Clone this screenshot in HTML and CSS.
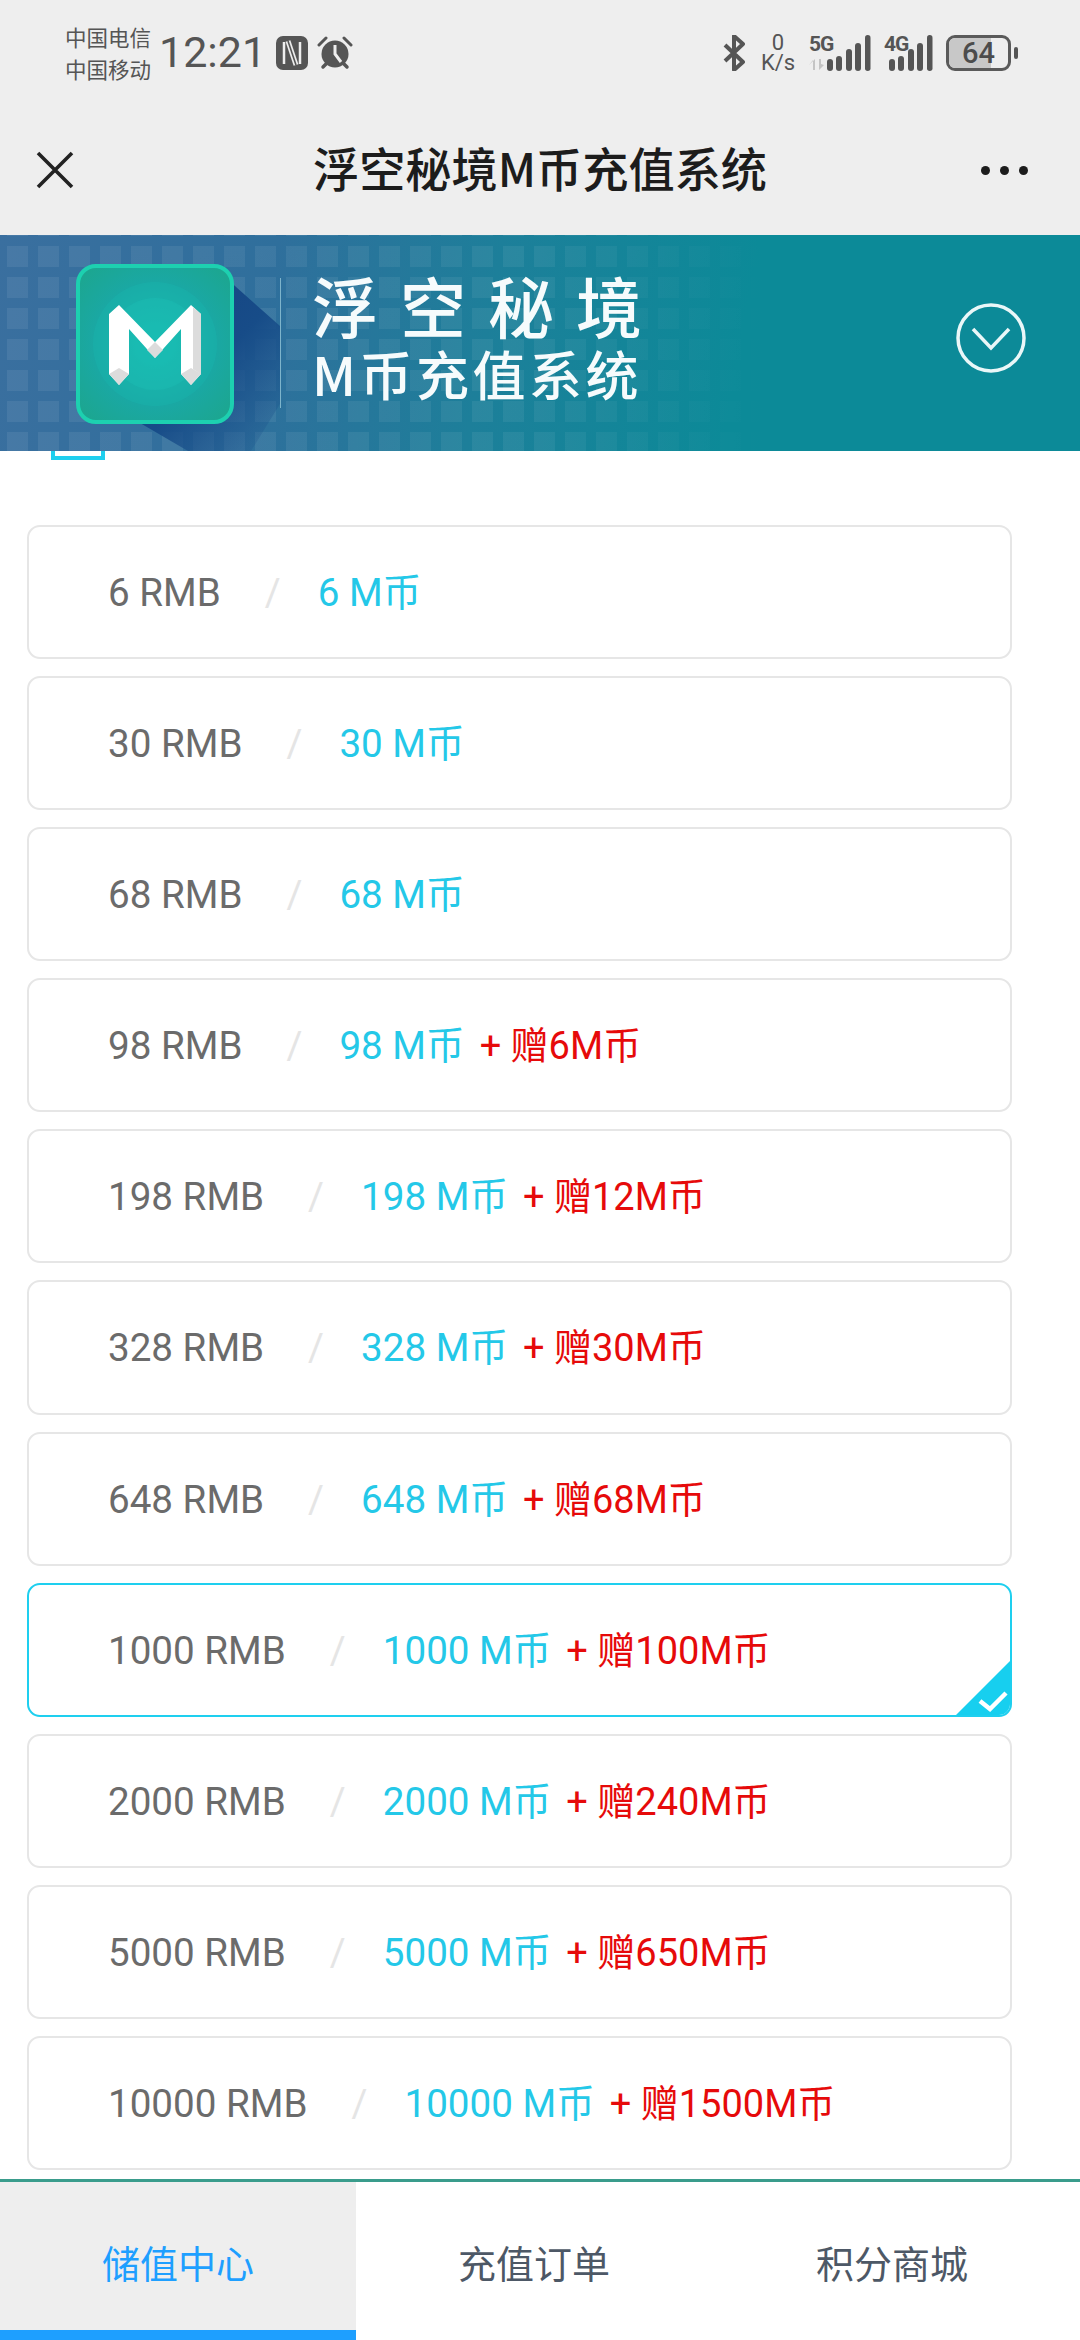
FILE: index.html
```html
<!DOCTYPE html>
<html lang="zh">
<head>
<meta charset="utf-8">
<title>浮空秘境M币充值系统</title>
<link rel="stylesheet" href="styles.css">
</head>
<body>
<div class="phone">
  <header class="chrome">
    <div class="status">
      <div class="carriers"><span>中国电信</span><span>中国移动</span></div>
      <div class="time">12:21</div>
      <svg class="nfc" width="32" height="34" viewBox="0 0 32 34"><rect width="32" height="34" rx="7" fill="#555"/><path d="M8 6v22M24 6v22" stroke="#eee" stroke-width="2.5" fill="none"/><path d="M12 5l8 24" stroke="#eee" stroke-width="5" fill="none"/><path d="M12 5l8 24" stroke="#555" stroke-width="1.6" fill="none"/></svg>
      <svg class="alarm" width="36" height="35" viewBox="0 0 36 35"><circle cx="18" cy="19" r="13.5" fill="#555"/><path d="M18 10v9l6 8" stroke="#eee" stroke-width="3" fill="none"/><path d="M2 10L9 3M34 10L27 3" stroke="#555" stroke-width="3" fill="none" stroke-linecap="round"/><path d="M6 32l3-3M30 32l-3-3" stroke="#555" stroke-width="3.5" stroke-linecap="round"/></svg>
      <div class="status-right">
        <svg class="bt" width="22" height="36" viewBox="0 0 22 36"><path d="M2 10l18 17-9 8V1l9 8L2 26" fill="none" stroke="#555" stroke-width="4" stroke-linejoin="round"/></svg>
        <div class="speed"><span>0</span><span>K/s</span></div>
        <div class="signal">
          <span class="net">5G</span>
          <svg class="arrows" width="16" height="11" viewBox="0 0 16 11"><path d="M0 6l4-5v10h2V0zM10 0v11l5-5-3-1V0z" fill="#c4c4c4"/></svg>
          <svg class="bars" width="44" height="36" viewBox="0 0 44 36"><g fill="#555"><rect x="0" y="24" width="6" height="12" rx="3"/><rect x="9" y="21" width="6" height="15" rx="3"/><rect x="19" y="14" width="6" height="22" rx="3"/><rect x="28" y="8" width="6" height="28" rx="3"/><rect x="38" y="0" width="5.500" height="36" rx="2.700"/></g></svg>
        </div>
        <div class="signal sim2">
          <span class="net">4G</span>
          <svg class="bars" width="44" height="36" viewBox="0 0 44 36"><g fill="#555"><rect x="0" y="24" width="6" height="12" rx="3"/><rect x="9" y="21" width="6" height="15" rx="3"/><rect x="19" y="14" width="6" height="22" rx="3"/><rect x="28" y="8" width="6" height="28" rx="3"/><rect x="38" y="0" width="5.500" height="36" rx="2.700"/></g></svg>
        </div>
        <div class="battery"><div class="cell"><span class="level"></span><span class="pct">64</span></div><span class="tip"></span></div>
      </div>
    </div>
    <nav class="nav">
      <svg class="close" width="38" height="38" viewBox="0 0 38 38"><path d="M2 2l34 34M36 2L2 36" stroke="#222" stroke-width="3.600" fill="none"/></svg>
      <h1 class="title">浮空秘境M币充值系统</h1>
      <div class="more"><i></i><i></i><i></i></div>
    </nav>
  </header>

  <section class="banner">
    <svg class="pixels" width="1080" height="216"><defs>
      <pattern id="px" width="31" height="31" patternUnits="userSpaceOnUse" x="2" y="-25"><rect x="5" y="5" width="21" height="21" fill="#fff"/></pattern>
      <linearGradient id="fade" x1="0" x2="1"><stop offset="0" stop-color="#131313"/><stop offset=".5" stop-color="#101010"/><stop offset=".72" stop-color="#000"/></linearGradient>
      <mask id="pm"><rect width="1080" height="216" fill="url(#fade)"/></mask></defs>
      <rect width="1080" height="216" fill="url(#px)" mask="url(#pm)"/></svg>
    <svg class="logo" width="230" height="187" viewBox="0 0 230 187"><defs>
      <radialGradient id="lg" cx=".5" cy=".5" r=".65"><stop offset="0" stop-color="#17c0b4"/><stop offset=".6" stop-color="#1aa8a4"/><stop offset="1" stop-color="#1ca690"/></radialGradient>
      <linearGradient id="shadow" x1="0" y1="0" x2="1" y2="1"><stop offset="0" stop-color="#153f80"/><stop offset=".55" stop-color="#174c88"/><stop offset="1" stop-color="#174c88" stop-opacity="0"/></linearGradient></defs>
      <path d="M150 14L204 62V140L175 187H112L40 145z" fill="url(#shadow)"/>
      <rect x="2" y="2" width="154" height="156" rx="18" fill="url(#lg)" stroke="#1dd0b0" stroke-width="4"/>
      <circle cx="79" cy="80" r="62" fill="#1ab6ae" opacity=".35"/>
      <circle cx="79" cy="80" r="46" fill="#1cc0b8" opacity=".35"/>
      <path d="M33 50l10-9 36 37 36-37 10 9v60l-10 11-10-11V65L79 94 53 65v45l-10 11-10-11z" fill="#fff"/>
      <path d="M33 110l10-6 10 6-10 11zM125 110l-10-6-10 6 10 11zM71 86l8-8 8 8-8 8zM117 43l8 7v60l-8-5z" fill="#dcdcdc"/>
    </svg>
    <span class="divider"></span>
    <div class="brand"><div class="brand-a">浮空秘境</div><div class="brand-b">M币充值系统</div></div>
    <svg class="chevron" width="70" height="70" viewBox="0 0 70 70"><circle cx="35" cy="35" r="33" fill="none" stroke="#eaf7f8" stroke-width="3.500"/><path d="M17 26l18 19 18-19" fill="none" stroke="#eaf7f8" stroke-width="3.500"/></svg>
  </section>
  <span class="peek"></span>

  <main class="list">
    <div class="row"><span class="rmb">6 RMB</span><span class="sep">/</span><span class="coin">6 M币</span></div>
    <div class="row"><span class="rmb">30 RMB</span><span class="sep">/</span><span class="coin">30 M币</span></div>
    <div class="row"><span class="rmb">68 RMB</span><span class="sep">/</span><span class="coin">68 M币</span></div>
    <div class="row"><span class="rmb">98 RMB</span><span class="sep">/</span><span class="coin">98 M币</span><span class="gift">+ 赠6M币</span></div>
    <div class="row"><span class="rmb">198 RMB</span><span class="sep">/</span><span class="coin">198 M币</span><span class="gift">+ 赠12M币</span></div>
    <div class="row"><span class="rmb">328 RMB</span><span class="sep">/</span><span class="coin">328 M币</span><span class="gift">+ 赠30M币</span></div>
    <div class="row"><span class="rmb">648 RMB</span><span class="sep">/</span><span class="coin">648 M币</span><span class="gift">+ 赠68M币</span></div>
    <div class="row selected"><span class="rmb">1000 RMB</span><span class="sep">/</span><span class="coin">1000 M币</span><span class="gift">+ 赠100M币</span>
      <svg class="tick" width="58" height="58" viewBox="0 0 58 58"><path d="M58 0V44a14 14 0 0 1-14 14H0z" fill="#17cfef"/><path d="M26 42l10 8 16-16" fill="none" stroke="#fff" stroke-width="4.500"/></svg>
    </div>
    <div class="row"><span class="rmb">2000 RMB</span><span class="sep">/</span><span class="coin">2000 M币</span><span class="gift">+ 赠240M币</span></div>
    <div class="row"><span class="rmb">5000 RMB</span><span class="sep">/</span><span class="coin">5000 M币</span><span class="gift">+ 赠650M币</span></div>
    <div class="row"><span class="rmb">10000 RMB</span><span class="sep">/</span><span class="coin">10000 M币</span><span class="gift">+ 赠1500M币</span></div>
  </main>

  <footer class="tabs">
    <div class="tab active">储值中心</div>
    <div class="tab">充值订单</div>
    <div class="tab">积分商城</div>
  </footer>
</div>
</body>
</html>
```
FILE: styles.css
```css
* { box-sizing: border-box; }
html, body { margin: 0; padding: 0; background: #fff; }
body { font-family: Roboto, "Noto Sans CJK SC", sans-serif; }
.phone { position: relative; width: 1080px; height: 2340px; overflow: hidden; display: flex; flex-direction: column; }

.chrome { background: #eeeeee; height: 235px; flex: none; }
.status { height: 105px; padding: 0 62px 0 65px; display: flex; align-items: center; color: #555; }
.carriers { display: flex; flex-direction: column; font-size: 21.500px; line-height: 32px; font-family: "Noto Sans CJK SC", sans-serif; margin-top: 1px; }
.time { font-size: 43px; line-height: 1; margin-left: 8px; }
.nfc { margin-left: 10px; }
.alarm { margin-left: 9px; }
.status-right { margin-left: auto; display: flex; align-items: center; }
.speed { display: flex; flex-direction: column; align-items: center; margin-left: 16px; font-size: 22px; line-height: 20px; width: 34px; }
.signal { position: relative; width: 62px; height: 36px; margin-left: 14px; }
.signal.sim2 { margin-left: 13px; width: 49px; }
.net { position: absolute; left: 0; top: -1px; font-size: 21px; line-height: 20px; font-weight: 700; letter-spacing: -1px; }
.arrows { position: absolute; left: 0; top: 24px; }
.bars { position: absolute; right: 0; top: 0; }
.battery { display: flex; align-items: center; margin-left: 13px; }
.cell { position: relative; width: 65px; height: 36px; border: 3px solid #5a5a5a; border-radius: 9px; display: flex; align-items: center; justify-content: center; overflow: hidden; }
.level { position: absolute; left: 0; top: 0; bottom: 0; width: 42px; background: #c8c8c8; }
.pct { position: relative; font-size: 29px; font-weight: 500; color: #4c4c4c; }
.tip { width: 4px; height: 12px; margin-left: 3px; border-radius: 2px; background: #555; }

.nav { height: 130px; padding: 0 52px 0 36px; display: flex; align-items: center; justify-content: space-between; position: relative; }
.title { margin: 0 0 6px; position: absolute; left: 0; right: 0; text-align: center; font-size: 46.200px; line-height: 54px; font-weight: 500; color: #1c1c1c; font-family: "Noto Sans CJK SC", sans-serif; }
.more { display: flex; gap: 10px; }
.more i { width: 9px; height: 9px; border-radius: 50%; background: #1c1c1c; }

.banner { position: relative; height: 216px; flex: none; display: flex; align-items: center; padding-left: 76px; overflow: hidden;
  background: linear-gradient(100deg, #3a6f9f 0%, #2f6f9c 25%, #1d7f9a 45%, #0c8a98 68%, #0c8a98 100%); }
.pixels { position: absolute; left: 0; top: 0; }
.logo { position: relative; flex: none; margin: 29px -26px 0 0; align-self: flex-start; }
.divider { position: relative; width: 1px; height: 130px; background: rgba(180,225,235,.6); flex: none; margin-right: 31px; }
.brand { position: relative; color: #f6fbfc; font-family: "Noto Sans CJK SC", sans-serif; font-weight: 500; display: flex; flex-direction: column; margin-top: -18px; }
.brand-a { font-size: 66px; line-height: 76px; letter-spacing: 22px; white-space: nowrap; }
.brand-b { font-size: 53px; line-height: 60px; letter-spacing: 3.500px; font-weight: 500; white-space: nowrap; margin-top: 1px; }
.chevron { position: absolute; right: 54px; top: 68px; }

.peek { position: absolute; left: 51px; top: 451px; width: 54px; height: 9px; border: 4px solid #1ecfef; border-top: 0; }

.list { flex: 1; padding: 74px 68px 0 27px; display: flex; flex-direction: column; gap: 17px; }
.row { position: relative; height: 134.100px; flex: none; display: flex; align-items: baseline; padding: 43px 0 0 79px; border: 2px solid #e6e6e6; border-radius: 13px; font-size: 38.600px; line-height: 46px; white-space: nowrap; overflow: hidden; }
.row.selected { border-color: #1ecfef; }
.rmb { color: #6b6b6b; }
.sep { color: #e5e5e5; margin: 0 41px 0 44px; width: 12px; }
.coin { color: #24c8e8; }
.gift { color: #e60a0a; margin-left: 15px; font-size: 38px; }
.tick { position: absolute; right: -2px; bottom: -2px; }

.tabs { flex: none; height: 161px; border-top: 3px solid #3a9c8c; display: grid; grid-template-columns: 356px 356px 360px; }
.tab { display: flex; align-items: center; justify-content: center; font-size: 38px; color: #4d5866; font-family: "Noto Sans CJK SC", sans-serif; }
.tab.active { background: #eeeeee; color: #1e9fff; border-bottom: 10px solid #1e9fff; padding-top: 10px; }
```
